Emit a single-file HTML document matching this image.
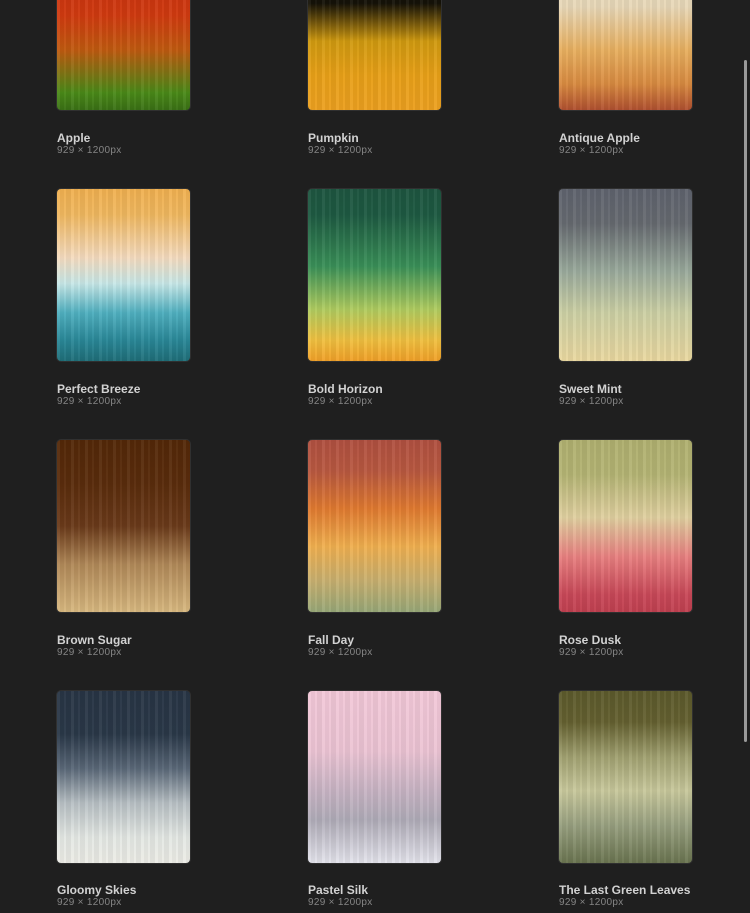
<!DOCTYPE html>
<html><head><meta charset="utf-8"><style>
html,body{margin:0;padding:0;background:#1f1f1f;width:750px;height:913px;overflow:hidden;font-family:"Liberation Sans",sans-serif}
.c{position:absolute;width:133px;height:172px;border-radius:4px;overflow:hidden;box-shadow:0 0 0 1px rgba(255,255,255,0.08)}
.c::after{content:"";position:absolute;inset:0;background:repeating-linear-gradient(90deg,rgba(255,255,255,0.05) 0 3px,rgba(0,0,0,0.04) 3px 7px,rgba(255,255,255,0.03) 7px 9px,rgba(0,0,0,0.05) 9px 14px)}
.t{position:absolute;font-size:12px;font-weight:bold;color:#d2d2d2;white-space:nowrap}
.s{position:absolute;font-size:10px;color:#858585;white-space:nowrap;letter-spacing:0.3px}
.sb{position:absolute;left:744px;top:60px;width:3px;height:682px;background:#9a9a9a;border-radius:2px}
</style></head><body>
<div class="c" style="left:57px;top:-62px;background:linear-gradient(#c02a10,#d03a10 45%,#c05a10 65%,#4a8a18 90%,#3a7015)"></div>
<div class="c" style="left:308px;top:-62px;background:linear-gradient(#101008 0%,#151208 38%,#d09a10 60%,#e8a018 80%,#eca020)"></div>
<div class="c" style="left:559px;top:-62px;background:linear-gradient(#e8e0c8,#e8d8b8 40%,#e8b060 65%,#d88a40 85%,#b05030)"></div>
<div class="t" style="left:57px;top:131px">Apple</div><div class="s" style="left:57px;top:145px">929 × 1200px</div>
<div class="t" style="left:308px;top:131px">Pumpkin</div><div class="s" style="left:308px;top:145px">929 × 1200px</div>
<div class="t" style="left:559px;top:131px">Antique Apple</div><div class="s" style="left:559px;top:145px">929 × 1200px</div>

<div class="c" style="left:57px;top:189px;background:linear-gradient(#f0b050,#f0b860 15%,#f5dcc0 40%,#c8e8e8 55%,#50b0c0 72%,#2a8898 88%,#1f6e78)"></div>
<div class="c" style="left:308px;top:189px;background:linear-gradient(#1e5540,#1e5a42 15%,#3a9058 45%,#b0cc60 70%,#f0c040 88%,#f0a028)"></div>
<div class="c" style="left:559px;top:189px;background:linear-gradient(#5f636e,#666a70 20%,#9aaa9c 48%,#ccd0a4 72%,#ead8a0)"></div>
<div class="t" style="left:57px;top:382px">Perfect Breeze</div><div class="s" style="left:57px;top:396px">929 × 1200px</div>
<div class="t" style="left:308px;top:382px">Bold Horizon</div><div class="s" style="left:308px;top:396px">929 × 1200px</div>
<div class="t" style="left:559px;top:382px">Sweet Mint</div><div class="s" style="left:559px;top:396px">929 × 1200px</div>

<div class="c" style="left:57px;top:440px;background:linear-gradient(#532808,#5a2c0c 25%,#6a3a1a 50%,#b08858 72%,#d8b880)"></div>
<div class="c" style="left:308px;top:440px;background:linear-gradient(#b05040,#b85840 18%,#e07a30 40%,#f0b050 62%,#c8b070 82%,#98a878)"></div>
<div class="c" style="left:559px;top:440px;background:linear-gradient(#b0b070,#b4b474 20%,#e0d0a0 45%,#e88080 68%,#c84858 90%,#c04050)"></div>
<div class="t" style="left:57px;top:633px">Brown Sugar</div><div class="s" style="left:57px;top:647px">929 × 1200px</div>
<div class="t" style="left:308px;top:633px">Fall Day</div><div class="s" style="left:308px;top:647px">929 × 1200px</div>
<div class="t" style="left:559px;top:633px">Rose Dusk</div><div class="s" style="left:559px;top:647px">929 × 1200px</div>

<div class="c" style="left:57px;top:691px;background:linear-gradient(#283545,#2a3848 25%,#5a6878 45%,#b8c0c4 65%,#e4e8e4 85%,#ecece6)"></div>
<div class="c" style="left:308px;top:691px;background:linear-gradient(#f2c8d8,#ecc4d4 35%,#c8b4c4 58%,#b0acb8 75%,#e4e4ec)"></div>
<div class="c" style="left:559px;top:691px;background:linear-gradient(#5c5a2c,#646030 18%,#a0a070 38%,#c8c89c 58%,#98a080 78%,#6a7450)"></div>
<div class="t" style="left:57px;top:883px">Gloomy Skies</div><div class="s" style="left:57px;top:897px">929 × 1200px</div>
<div class="t" style="left:308px;top:883px">Pastel Silk</div><div class="s" style="left:308px;top:897px">929 × 1200px</div>
<div class="t" style="left:559px;top:883px">The Last Green Leaves</div><div class="s" style="left:559px;top:897px">929 × 1200px</div>

<div class="sb"></div>
</body></html>
